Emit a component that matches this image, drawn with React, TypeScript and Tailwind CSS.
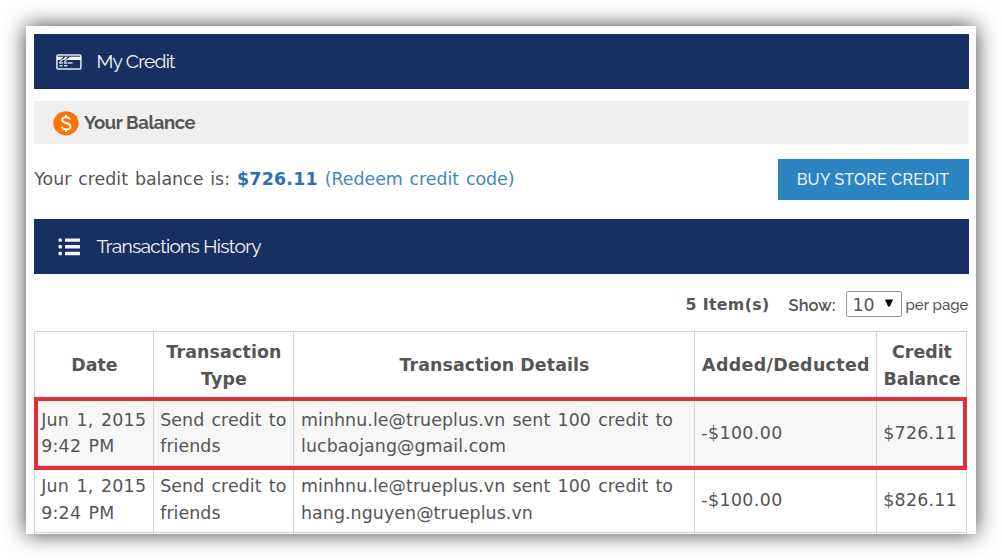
import type { ReactNode } from "react";

const verdana = "font-['DejaVu_Sans',Verdana,sans-serif]";
const raleway = "font-['Raleway','Lato',sans-serif]";

function CreditCardIcon() {
  return (
    <svg width="26" height="16" viewBox="0 0 26 16" fill="none" className="shrink-0">
      <rect x="0.9" y="0.9" width="24" height="14.2" rx="1" stroke="#e2e7f1" strokeWidth="1.5" />
      <path d="M1 4.3H25" stroke="#fff" strokeWidth="3.2" />
      <path d="M5 6.500L8.500 2.500M9.500 6.500L13 2.500" stroke="#182f62" strokeWidth="1.3" />
      <path d="M3 8.900H7M8 8.900H11.500M12 8.900H16.500M3.500 11.700H6.500M8 11.700H11.500" stroke="#cfd6e6" strokeWidth="1.5" />
      <path d="M3.500 8.500L7 5M8 8.500L11.500 5" stroke="#cfd6e6" strokeWidth="1.2" />
    </svg>
  );
}

function ListIcon() {
  return (
    <svg width="22" height="18" viewBox="0 0 22 18" fill="#f4f6fb" className="mt-[1px] ml-[2px] shrink-0">
      {[0.4, 7.1, 13.8].map((y) => (
        <g key={y}>
          <rect x="0.5" y={y} width="3.4" height="3.4" rx="1" />
          <rect x="7" y={y} width="15" height="3.4" rx="0.4" />
        </g>
      ))}
    </svg>
  );
}

function CoinIcon() {
  return (
    <svg width="26" height="25" viewBox="0 0 26 25" fill="none" className="mt-[1px] shrink-0">
      <ellipse cx="13" cy="12.3" rx="12.6" ry="12.1" fill="#ff7100" />
      <path
        d="M17.200 8.600C16.600 7 15.200 6.200 13 6.200C10.700 6.200 9.100 7.300 9.100 9.100C9.100 13 17.400 11 17.400 15.400C17.400 17.300 15.600 18.400 13.200 18.400C10.800 18.400 9.100 17.300 8.600 15.500M13 3.700V6.200M13 18.400V21"
        stroke="#fff"
        strokeWidth="1.9"
      />
    </svg>
  );
}

function TitleBar({ icon, children }: { icon: ReactNode; children: ReactNode }) {
  return (
    <div className={`${raleway} flex h-[55px] items-center bg-[#182f62] text-[19.2px] text-[#f3f5fa]`}>
      <div className="flex w-[63px] pl-[22px]">{icon}</div>
      {children}
    </div>
  );
}

const rows = [
  {
    date: ["Jun 1, 2015", "9:42 PM"],
    details: ["minhnu.le@trueplus.vn sent 100 credit to", "lucbaojang@gmail.com"],
    amount: "-$100.00",
    balance: "$726.11",
  },
  {
    date: ["Jun 1, 2015", "9:24 PM"],
    details: ["minhnu.le@trueplus.vn sent 100 credit to", "hang.nguyen@trueplus.vn"],
    amount: "-$100.00",
    balance: "$826.11",
  },
];

const columns = "grid grid-cols-[119px_140px_401px_182px_90px]";
const cell = "flex flex-col justify-center border-r border-[#d3d3d3] whitespace-nowrap";

export default function App() {
  return (
    <div className="h-[560px] w-[1002px] overflow-hidden bg-white p-[26px]">
      <div
        className={`${verdana} h-[508px] w-[950px] overflow-hidden bg-white pt-[8px] pr-[7.5px] pl-[7.5px] text-[17.4px] text-[#555] shadow-[0_0_21px_rgba(0,0,0,0.75)]`}
      >
        <TitleBar icon={<CreditCardIcon />}>
          <span className="mb-[1px] tracking-[-0.75px]">My Credit</span>
        </TitleBar>

        <div className={`${raleway} mt-[12px] flex h-[43px] items-center bg-[#efefef] pl-[19.5px] text-[18.5px] font-bold`}>
          <CoinIcon />
          <span className="ml-[5px] tracking-[-0.45px]">Your Balance</span>
        </div>

        <div className="mt-[15px] flex h-[41px] items-center justify-between whitespace-nowrap">
          <div className="pl-[0.7px] [word-spacing:1.4px]">
            <span>Your credit balance is: </span>
            <b className="tracking-[0.25px] text-[#2b70b8]">$726.11</b>
            <span className="tracking-[-0.04px] text-[#4287c2]"> (Redeem credit code)</span>
          </div>
          <button
            className={`${raleway} h-[41px] w-[191px] bg-[#2c85c0] text-[16px] font-medium tracking-[0.25px] text-[#eef6fc]`}
          >
            BUY STORE CREDIT
          </button>
        </div>

        <div className="mt-[19px]">
          <TitleBar icon={<ListIcon />}>
            <span className="tracking-[-0.7px]">Transactions History</span>
          </TitleBar>
        </div>

        <div className="mt-[16px] flex h-[27px] items-center justify-end whitespace-nowrap">
          <b className="mt-[3px] text-[15.8px] tracking-[0.35px]">5 Item(s)</b>
          <span className={`${raleway} mt-[3px] ml-[19px] text-[16.5px] font-semibold`}>Show:</span>
          <div className="ml-[10px] flex h-[26px] w-[56px] items-center justify-between rounded-[2px] border border-[#999] pr-[8px] pl-[6px]">
            <span className="mt-[3px]">10</span>
            <svg width="8" height="8" viewBox="0 0 8 8" className="mb-[1px]">
              <path d="M0 0.500H8L5 7.500H3Z" fill="#000" />
            </svg>
          </div>
          <span className={`${raleway} mt-[4px] ml-[4px] text-[15px] font-medium`}>per page</span>
        </div>

        <div className="relative mt-[14px] w-[933px] border-t border-l border-[#d3d3d3] leading-[26.4px]">
          <div className={`${columns} h-[66px] text-center font-bold *:pt-px *:pl-[2px]`}>
            <div className={cell}>Date</div>
            <div className={`${cell} tracking-[0.15px]`}>
              <span>Transaction</span>
              <span>Type</span>
            </div>
            <div className={`${cell} tracking-[0.1px]`}>Transaction Details</div>
            <div className={`${cell} tracking-[0.35px]`}>Added/Deducted</div>
            <div className={cell}>
              <span>Credit</span>
              <span>Balance</span>
            </div>
          </div>
          {rows.map((row, i) => (
            <div
              key={i}
              className={`${columns} ${i === 0 ? "h-[68px] bg-[#f7f7f7] *:pt-[3px]" : "h-[67px] *:pt-[1.5px]"} border-b border-[#d3d3d3] [word-spacing:1.6px]`}
            >
              <div className={`${cell} pl-[6.7px] tracking-[0.25px]`}>
                {row.date.map((line) => (
                  <span key={line}>{line}</span>
                ))}
              </div>
              <div className={`${cell} pl-[6.7px] tracking-[0.07px]`}>
                <span>Send credit to</span>
                <span>friends</span>
              </div>
              <div className={`${cell} pl-[7.5px] tracking-[0.07px]`}>
                {row.details.map((line) => (
                  <span key={line}>{line}</span>
                ))}
              </div>
              <div className={`${cell} pl-[6.8px] tracking-[0.4px]`}>{row.amount}</div>
              <div className={`${cell} pl-[6.8px] tracking-[0.25px]`}>{row.balance}</div>
            </div>
          ))}
          <div className={`${columns} h-[20px]`}>
            <div className={cell} />
            <div className={cell} />
            <div className={cell} />
            <div className={cell} />
            <div className={cell} />
          </div>
          <div className="absolute top-[65px] left-[-1px] h-[73px] w-[933.4px] border-4 border-[#e03236]" />
        </div>
      </div>
    </div>
  );
}
